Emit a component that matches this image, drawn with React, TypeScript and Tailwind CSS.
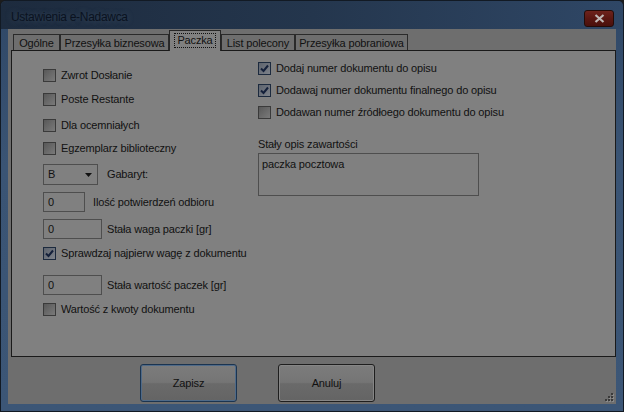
import React from "react"

function CheckBox({ checked = false }: { checked?: boolean }) {
  return (
    <span
      className={
        "flex h-[13px] w-[13px] shrink-0 items-center justify-center border " +
        (checked
          ? "border-[#1c2a3e] bg-[linear-gradient(135deg,#5d636d,#7e828a)]"
          : "border-[#3a3a3a] bg-[linear-gradient(135deg,#585858,#7a7a7a)]")
      }
    >
      {checked && (
        <svg width="11" height="11" viewBox="0 0 11 11">
          <path d="M2 5.5 L4.5 8 L9 2.5" fill="none" stroke="#14203a" strokeWidth="2" />
        </svg>
      )}
    </span>
  )
}

function CheckRow({ label, checked, className }: { label: string; checked?: boolean; className: string }) {
  return (
    <div className={"flex h-[20px] items-center gap-[5px] " + className}>
      <CheckBox checked={checked} />
      <span className="whitespace-nowrap">{label}</span>
    </div>
  )
}

function NumBox({ w, label, gap, className }: { w: string; label: string; gap: string; className: string }) {
  return (
    <div className={"flex h-[20px] items-center " + gap + " " + className}>
      <div className={"flex h-[20px] items-center border border-[#4e4e4e] bg-[#808080] pl-[4px] " + w}>0</div>
      <span className="whitespace-nowrap">{label}</span>
    </div>
  )
}

const tabs = [
  { name: "Ogólne", w: "w-[47px]" },
  { name: "Przesyłka biznesowa", w: "w-[109px]" },
  { name: "Paczka", w: "w-[52px]", active: true },
  { name: "List polecony", w: "w-[74px]" },
  { name: "Przesyłka pobraniowa", w: "w-[113px]" },
]

export default function App() {
  return (
    <div className="h-[412px] w-[624px] bg-[#1c1c1c] font-['Liberation_Sans',Arial,sans-serif] text-[11px] tracking-[-0.15px] text-[#111]">
      <div className="flex h-full w-full flex-col overflow-hidden rounded-t-[6px] border border-[#121a24] bg-[linear-gradient(180deg,#2f4766_0%,#3a5474_40%,#3c5676_100%)]">
        {/* title bar */}
        <div className="flex h-[28px] shrink-0 items-start bg-[linear-gradient(90deg,#1d2b3e_0%,#24364d_50%,#2f4766_100%)]">
          <span className="ml-[10px] mt-[9px] text-[12px] leading-[14px] tracking-[-0.3px] text-[#0a1220] [text-shadow:0_0_6px_rgba(120,140,160,0.35)]">
            Ustawienia e-Nadawca
          </span>
          <div className="ml-auto mr-[9px] mt-[9px] flex h-[17px] w-[30px] items-center justify-center rounded-[3px] border border-[#240b08] bg-[linear-gradient(180deg,#6e231c_0%,#5a1712_50%,#4a100c_100%)]">
            <svg width="11" height="9" viewBox="0 0 11 9">
              <path d="M1.5 1 L9.5 8 M9.5 1 L1.5 8" stroke="#bdb6b4" strokeWidth="2.2" />
            </svg>
          </div>
        </div>

        {/* client */}
        <div className="mx-[7px] flex h-[375px] shrink-0 flex-col bg-[#6e6e6e]">
          {/* tab strip */}
          <div className="ml-[5px] mt-[1px] flex h-[20px] items-end">
            {tabs.map((t) =>
              t.active ? (
                <div
                  key={t.name}
                  className={"relative z-10 -mb-[1px] flex h-[21px] items-start justify-center border border-b-0 border-[#262626] bg-[#808080] pt-[2px] " + t.w}
                >
                  <span className="border border-dotted border-[#111] px-[2px] leading-[13px]">{t.name}</span>
                </div>
              ) : (
                <div
                  key={t.name}
                  className={"flex h-[16px] items-center justify-center border border-b-0 border-[#2a2a2a] bg-[#6e6e6e] leading-[14px] " + t.w}
                >
                  {t.name}
                </div>
              )
            )}
          </div>

          {/* panel */}
          <div className="ml-[3px] flex h-[307px] w-[605px] border border-[#1a1a1a] bg-[#808080]">
            <div className="ml-[31px] flex w-[215px] flex-col">
              <CheckRow label="Zwrot Dosłanie" className="mt-[14px]" />
              <CheckRow label="Poste Restante" className="mt-[4px]" />
              <CheckRow label="Dla ocemniałych" className="mt-[6px]" />
              <CheckRow label="Egzemplarz biblioteczny" className="mt-[3px]" />
              <div className="mt-[6px] flex h-[21px] items-center gap-[9px]">
                <div className="flex h-[21px] w-[55px] items-center border border-[#4e4e4e] bg-[#808080] pl-[4px] pr-[5px]">
                  <span>B</span>
                  <svg className="ml-auto" width="7" height="4" viewBox="0 0 7 4">
                    <path d="M0 0 H7 L3.5 4 Z" fill="#111" />
                  </svg>
                </div>
                <span>Gabaryt:</span>
              </div>
              <NumBox w="w-[42px]" gap="gap-[8px]" label="Ilość potwierdzeń odbioru" className="mt-[7px]" />
              <NumBox w="w-[59px]" gap="gap-[5px]" label="Stała waga paczki [gr]" className="mt-[7px]" />
              <CheckRow label="Sprawdzaj najpierw wagę z dokumentu" checked className="mt-[4px]" />
              <NumBox w="w-[59px]" gap="gap-[5px]" label="Stała wartość paczek [gr]" className="mt-[12px]" />
              <CheckRow label="Wartość z kwoty dokumentu" className="mt-[4px]" />
            </div>

            <div className="flex flex-col">
              <CheckRow label="Dodaj numer dokumentu do opisu" checked className="mt-[7px]" />
              <CheckRow label="Dodawaj numer dokumentu finalnego do opisu" checked className="mt-[2px]" />
              <CheckRow label="Dodawan numer źródłoego dokumentu do opisu" className="mt-[2px]" />
              <div className="mt-[15px] h-[14px] leading-[14px]">Stały opis zawartości</div>
              <div className="mt-[2px] h-[43px] w-[221px] border border-[#4e4e4e] bg-[#808080] px-[3px] pt-[3px] leading-[14px]">
                paczka pocztowa
              </div>
            </div>
          </div>

          {/* buttons */}
          <div className="relative flex flex-1 items-start gap-[41px] pl-[132px] pt-[7px]">
            <button className="flex h-[38px] w-[97px] items-center justify-center rounded-[3px] border border-[#1b3450] bg-[linear-gradient(180deg,#7c7c7c_0%,#757575_48%,#6a6a6a_52%,#646464_100%)] text-[11px] text-[#111] shadow-[inset_0_0_0_1px_#4f6a88]">
              Zapisz
            </button>
            <button className="flex h-[38px] w-[97px] items-center justify-center rounded-[3px] border border-[#1e1e1e] bg-[linear-gradient(180deg,#7c7c7c_0%,#757575_48%,#6a6a6a_52%,#646464_100%)] text-[11px] text-[#111] shadow-[inset_0_0_0_1px_#868686]">
              Anuluj
            </button>
            <svg className="absolute bottom-[2px] right-[2px]" width="10" height="10" viewBox="0 0 10 10">
              {[
                [7, 1],
                [4, 4],
                [7, 4],
                [1, 7],
                [4, 7],
                [7, 7],
              ].map(([x, y]) => (
                <g key={`${x}-${y}`}>
                  <rect x={x + 1} y={y + 1} width="2" height="2" fill="#8a8a8a" />
                  <rect x={x} y={y} width="2" height="2" fill="#3a3a3a" />
                </g>
              ))}
            </svg>
          </div>
        </div>
      </div>
    </div>
  )
}
